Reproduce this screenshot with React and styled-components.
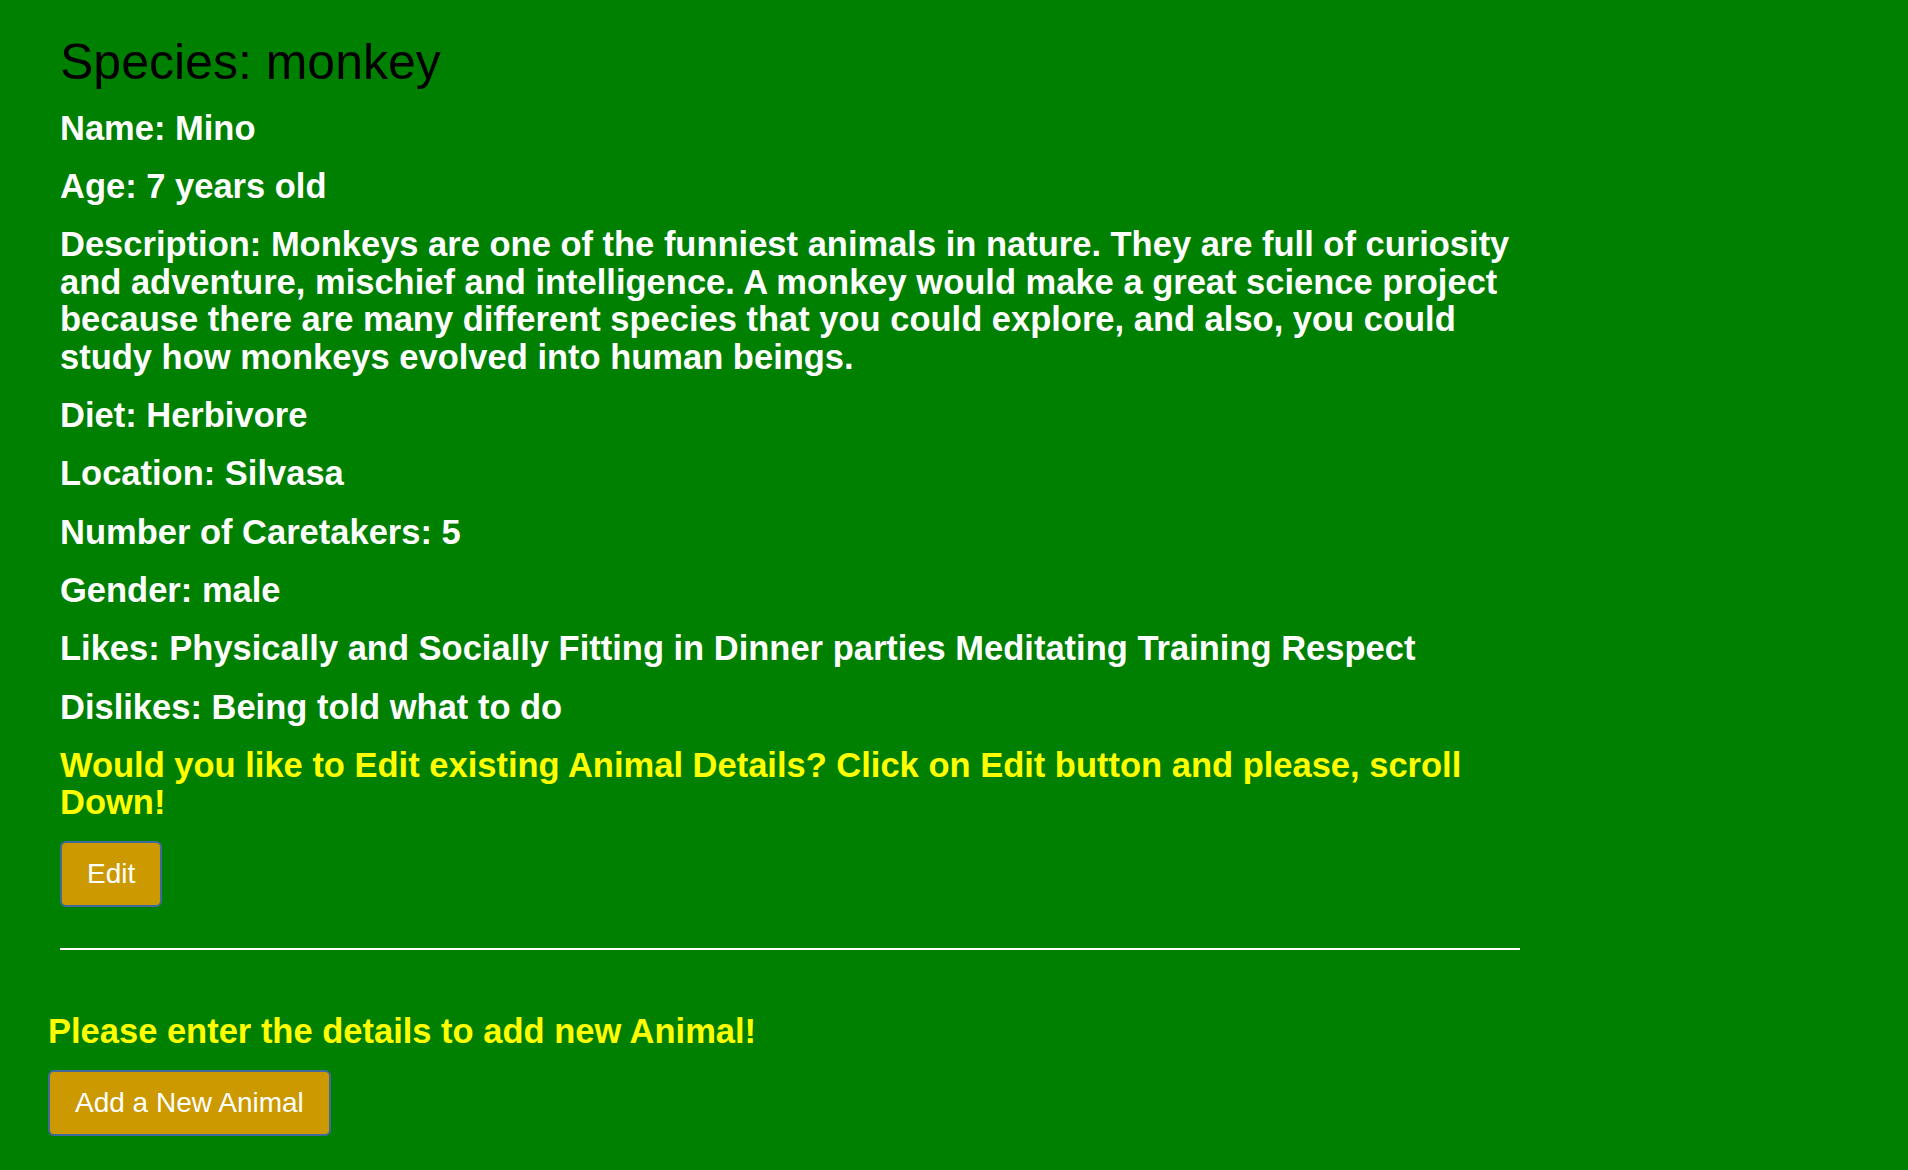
import React from "react";
import styled, { createGlobalStyle } from "styled-components";

const GlobalStyle = createGlobalStyle`
  html, body {
    margin: 0;
    padding: 0;
    background: #008000;
    min-height: 100%;
  }
  body {
    font-family: "Liberation Sans", Helvetica, Arial, sans-serif;
  }
`;

const Page = styled.div`
  min-height: 100vh;
  box-sizing: border-box;
  background: #008000;
  padding: 34px 48px 0;
`;

const DetailCard = styled.section`
  margin-left: 12px;
  width: 1460px;
  display: flex;
  flex-direction: column;
  align-items: flex-start;
`;

const SpeciesTitle = styled.h1`
  margin: 0;
  font-size: 50px;
  line-height: 57px;
  font-weight: 400;
  color: #000;
`;

const Field = styled.p`
  margin: ${(p) => (p.$first ? "18.5px" : "20.7px")} 0 0;
  font-size: 34.5px;
  line-height: 37.6px;
  font-weight: 700;
  color: ${(p) => (p.$highlight ? "#ffff00" : "#ffffff")};
`;

const ActionButton = styled.button`
  margin-top: ${(p) => p.$offset};
  font-family: "Liberation Sans", Helvetica, Arial, sans-serif;
  font-size: 28px;
  line-height: 32px;
  font-weight: 400;
  color: #ffffff;
  background: #cc9900;
  border: 2px solid #41699e;
  border-radius: 6px;
  padding: 15px 25px;
  cursor: pointer;
`;

const Divider = styled.hr`
  margin: 41px 0 0;
  width: 1460px;
  height: 2px;
  border: none;
  background: #ffffff;
`;

const AddSection = styled.section`
  margin-top: 63px;
  display: flex;
  flex-direction: column;
  align-items: flex-start;
`;

const Prompt = styled.h3`
  margin: 0;
  font-size: 34.5px;
  line-height: 37.5px;
  font-weight: 700;
  color: #ffff00;
`;

const animal = {
  species: "monkey",
  fields: [
    ["Name", "Mino"],
    ["Age", "7 years old"],
    [
      "Description",
      "Monkeys are one of the funniest animals in nature. They are full of curiosity and adventure, mischief and intelligence. A monkey would make a great science project because there are many different species that you could explore, and also, you could study how monkeys evolved into human beings.",
    ],
    ["Diet", "Herbivore"],
    ["Location", "Silvasa"],
    ["Number of Caretakers", "5"],
    ["Gender", "male"],
    ["Likes", "Physically and Socially Fitting in Dinner parties Meditating Training Respect"],
    ["Dislikes", "Being told what to do"],
  ],
};

export default function App() {
  return (
    <>
      <GlobalStyle />
      <Page>
        <DetailCard>
          <SpeciesTitle>Species: {animal.species}</SpeciesTitle>
          {animal.fields.map(([label, value], i) => (
            <Field key={label} $first={i === 0}>
              {label}: {value}
            </Field>
          ))}
          <Field $highlight>
            Would you like to Edit existing Animal Details? Click on Edit button and please, scroll Down!
          </Field>
          <ActionButton $offset="19px">Edit</ActionButton>
          <Divider />
        </DetailCard>
        <AddSection>
          <Prompt>Please enter the details to add new Animal!</Prompt>
          <ActionButton $offset="19px">Add a New Animal</ActionButton>
        </AddSection>
      </Page>
    </>
  );
}
